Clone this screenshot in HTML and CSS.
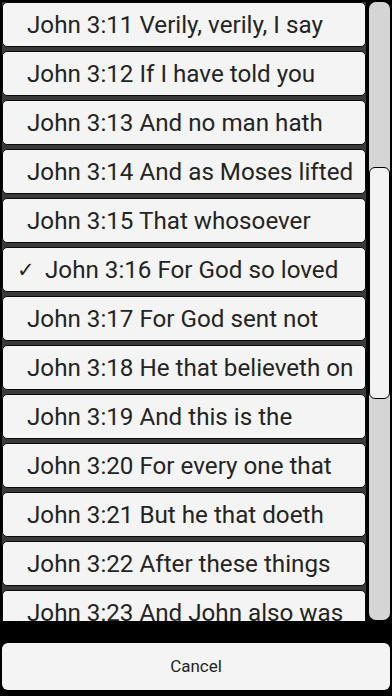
FILE: index.html
```html
<!DOCTYPE html>
<html>
<head>
<meta charset="utf-8">
<link rel="stylesheet" href="styles.css">
</head>
<body>
<div class="sheet">
  <div class="picker">
    <ul class="list">
      <li class="row">John 3:11 Verily, verily, I say</li>
      <li class="row">John 3:12 If I have told you</li>
      <li class="row">John 3:13 And no man hath</li>
      <li class="row">John 3:14 And as Moses lifted</li>
      <li class="row">John 3:15 That whosoever</li>
      <li class="row selected"><span class="check">✓</span>John 3:16 For God so loved</li>
      <li class="row">John 3:17 For God sent not</li>
      <li class="row">John 3:18 He that believeth on</li>
      <li class="row">John 3:19 And this is the</li>
      <li class="row">John 3:20 For every one that</li>
      <li class="row">John 3:21 But he that doeth</li>
      <li class="row">John 3:22 After these things</li>
      <li class="row">John 3:23 And John also was</li>
    </ul>
    <div class="track"><div class="thumb"></div></div>
  </div>
  <button class="cancel">Cancel</button>
</div>
</body>
</html>
```
FILE: styles.css
```css
html, body {
  margin: 0;
  padding: 0;
  background: #000;
}
.sheet {
  width: 392px;
  height: 696px;
  overflow: hidden;
  display: flex;
  flex-direction: column;
  font-family: Roboto, "Liberation Sans", sans-serif;
  color: #242424;
}
.picker {
  height: 619px;
  margin-top: 2px;
  display: flex;
  gap: 3px;
  padding: 0 2px;
}
.list {
  list-style: none;
  margin: 0;
  padding: 0;
  flex: 1;
  overflow: hidden;
  display: flex;
  flex-direction: column;
  gap: 4px;
  background: #3a3a3a;
}
.row {
  flex: 0 0 45px;
  box-sizing: border-box;
  background: #f4f4f4;
  border: 1px solid #0a0a0a;
  border-radius: 5px;
  display: flex;
  align-items: center;
  padding-left: 24px;
  padding-top: 1px;
  font-size: 24.2px;
  white-space: nowrap;
  overflow: hidden;
}
.row.selected {
  padding-left: 14px;
}
.check {
  font-family: "DejaVu Sans", sans-serif;
  font-size: 21px;
  width: 28px;
}
.track {
  width: 21px;
  height: 618px;
  box-sizing: border-box;
  background: #d5d5d5;
  border-radius: 7px;
  padding-top: 165px;
}
.thumb {
  height: 232px;
  box-sizing: border-box;
  background: #f3f3f3;
  border: 1px solid #000;
  border-radius: 6px;
}
.cancel {
  margin: 22px 2px 0;
  height: 47px;
  border: none;
  border-radius: 6px;
  background: #f4f4f4;
  font-family: Roboto, "Liberation Sans", sans-serif;
  font-size: 17px;
  color: #242424;
  padding: 0 0 2px;
}
```
